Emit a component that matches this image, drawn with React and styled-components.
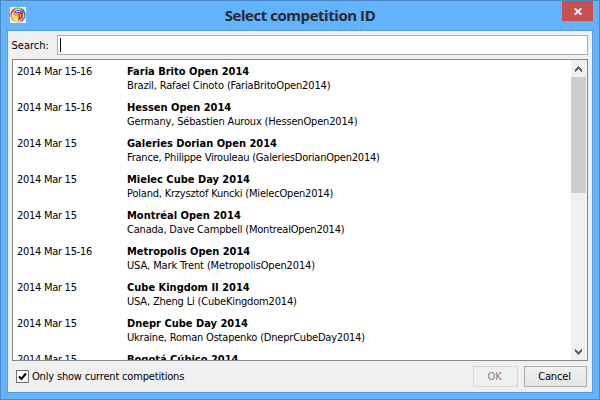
import React from "react";
import styled, { createGlobalStyle } from "styled-components";

const Global = createGlobalStyle`
  *, *::before, *::after { box-sizing: border-box; }
  body { margin: 0; overflow: hidden; }
`;

const Window = styled.main`
  width: 600px;
  height: 400px;
  display: flex;
  flex-direction: column;
  padding: 0 6px 6px;
  border: 1px solid #4b8ac6;
  background: #63b2fc;
  color: #000;
  font: 11px/14px "DejaVu Sans Condensed", "Noto Sans", sans-serif;
`;

const TitleBar = styled.header`
  display: grid;
  grid-template-columns: 31px 1fr 31px;
  height: 29px;
  flex: none;
`;

const AppIcon = styled.svg`
  width: 16px;
  height: 16px;
  margin: 6px 0 0 3px;
`;

const Title = styled.h1`
  margin: 0;
  text-align: center;
  font: 700 15px/29px "Open Sans", sans-serif;
  letter-spacing: ${(p) => p.$spacing}px;
  color: #26292d;
`;

const CloseButton = styled.button`
  display: flex;
  align-items: flex-start;
  width: 31px;
  height: 20px;
  padding: 7px 0 0 12px;
  border: 0;
  background: #c75050;
  svg { display: block; }
`;

const Content = styled.section`
  width: 586px;
  height: 363px;
  display: flex;
  flex-direction: column;
  padding: 4px 4px 0;
  border: 1px solid #559ade;
  background: #f0f0f0;
`;

const SearchRow = styled.div`
  display: flex;
  height: 20px;
  margin-bottom: 4px;
  line-height: 21px;
`;

const SearchLabel = styled.label`
  width: 45px;
  text-indent: -0.5px;
`;

const SearchField = styled.div`
  width: 531px;
  padding: 2px;
  border: 1px solid #abadb3;
  background: #fff;
`;

const Caret = styled.div`
  width: 1px;
  height: 14px;
  background: #000;
`;

const ListBox = styled.div`
  display: flex;
  width: 576px;
  height: 302px;
  border: 1px solid #828790;
  background: #fff;
`;

const List = styled.ul`
  width: 558px;
  height: 300px;
  margin: 0;
  padding: 5px 0 0 4px;
  overflow: hidden;
  list-style: none;
`;

const Row = styled.li`
  display: grid;
  grid-template-columns: 110px 1fr;
  height: 36px;
  white-space: nowrap;
`;

const Text = styled.span`
  display: block;
  letter-spacing: ${(p) => p.$spacing || 0}px;
`;

const Name = styled.strong`
  display: block;
  font-weight: 700;
`;

const ScrollBar = styled.div`
  width: 16px;
  height: 300px;
  display: flex;
  flex-direction: column;
  background: #f0f0f0;
`;

const ScrollButton = styled.div`
  height: 17px;
  padding: ${(p) => (p.$down ? "6px" : "6px")} 0 0 4px;
  svg { display: block; }
`;

const Thumb = styled.div`
  width: 15px;
  height: 116px;
  margin-bottom: auto;
  background: #cdcdcd;
`;

const Footer = styled.footer`
  display: flex;
  padding: 5px 1px 0 4px;
`;

const CheckBox = styled.span`
  width: 13px;
  height: 13px;
  margin: 4px 3px 0 0;
  border: 1px solid #707070;
  background: #fff;
  svg { display: block; }
`;

const CheckLabel = styled.span`
  flex: 1;
  line-height: 21px;
  letter-spacing: ${(p) => p.$spacing}px;
`;

const Button = styled.button`
  width: ${(p) => p.$width}px;
  height: 21px;
  margin-left: 6px;
  padding: 0 2px 0 0;
  border: 1px solid #acacac;
  background: linear-gradient(#f0f0f0, #e5e5e5);
  color: #000;
  font: inherit;
  line-height: 19px;
  letter-spacing: -0.15px;
  &:disabled { border-color: #d9d9d9; background: #efefef; color: #838383; }
`;

const competitions = [
  { date: "2014 Mar 15-16", name: "Faria Brito Open 2014", place: "Brazil, Rafael Cinoto (FariaBritoOpen2014)", spacing: -0.15 },
  { date: "2014 Mar 15-16", name: "Hessen Open 2014", place: "Germany, Sébastien Auroux (HessenOpen2014)", spacing: -0.17 },
  { date: "2014 Mar 15", name: "Galeries Dorian Open 2014", place: "France, Philippe Virouleau (GaleriesDorianOpen2014)", spacing: -0.22 },
  { date: "2014 Mar 15", name: "Mielec Cube Day 2014", place: "Poland, Krzysztof Kuncki (MielecOpen2014)", spacing: -0.2 },
  { date: "2014 Mar 15", name: "Montréal Open 2014", place: "Canada, Dave Campbell (MontrealOpen2014)", spacing: -0.2 },
  { date: "2014 Mar 15-16", name: "Metropolis Open 2014", place: "USA, Mark Trent (MetropolisOpen2014)", spacing: -0.13 },
  { date: "2014 Mar 15", name: "Cube Kingdom II 2014", place: "USA, Zheng Li (CubeKingdom2014)", spacing: -0.18 },
  { date: "2014 Mar 15", name: "Dnepr Cube Day 2014", place: "Ukraine, Roman Ostapenko (DneprCubeDay2014)", spacing: -0.2 },
  { date: "2014 Mar 15", name: "Bogotá Cúbico 2014" },
];

const Chevron = ({ down }) => (
  <svg width="7" height="6" viewBox="0 0 7 6" shapeRendering="crispEdges">
    <path
      d={
        down
          ? "M0 0H1V1H2V2H3V3H4V2H5V1H6V0H7V3H6V4H5V5H4V6H3V5H2V4H1V3H0Z"
          : "M0 6H1V5H2V4H3V3H4V4H5V5H6V6H7V3H6V2H5V1H4V0H3V1H2V2H1V3H0Z"
      }
      fill="#606060"
    />
  </svg>
);

const CubeIcon = () => (
  <AppIcon viewBox="0 0 16 16">
    <rect width="16" height="16" fill="#fff" />
    <g fill="none" strokeWidth="1.8">
      <path d="M1.2 8 A6.8 6.8 0 0 1 5.5 1.7" stroke="#e1473c" />
      <path d="M5.5 1.7 A6.8 6.8 0 0 1 11 1.9" stroke="#a9b45a" />
      <path d="M11 1.9 A6.8 6.8 0 0 1 14.8 8" stroke="#3e8f4c" />
      <path d="M14.8 8 A6.8 6.8 0 0 1 10 14.5" stroke="#6f83c0" />
      <path d="M10 14.5 A6.8 6.8 0 0 1 4 13.5" stroke="#f2d050" />
      <path d="M4 13.5 A6.8 6.8 0 0 1 1.2 8" stroke="#f18b3a" />
    </g>
    <path d="M2.8 5 L8 2.4 L13.4 4.2 L8.5 7 Z" fill="#4b63b3" />
    <path d="M2.8 5 L8.5 7 L8.3 13.8 L3.8 10.8 Z" fill="#f3a52f" />
    <path d="M4.4 8.6 L8.4 9.4 L8.3 13.8 L3.8 10.8 Z" fill="#f6dd3d" />
    <path d="M8.5 7 L13.4 4.2 L12.8 11 L8.3 13.8 Z" fill="#d8262e" />
    <path d="M6 4.5 L10 4.6 M10.7 7.2 V10.4" stroke="#e8e8f4" strokeWidth="0.9" />
  </AppIcon>
);

export default function App() {
  return (
    <>
      <Global />
      <Window>
        <TitleBar>
          <CubeIcon />
          <Title $spacing={-0.45}>Select competition ID</Title>
          <CloseButton aria-label="Close">
            <svg width="8" height="7" viewBox="0 0 8 7">
              <path d="M0.7 0.3 L7.3 6.7 M7.3 0.3 L0.7 6.7" stroke="#fff" strokeWidth="1.9" />
            </svg>
          </CloseButton>
        </TitleBar>
        <Content>
          <SearchRow>
            <SearchLabel>Search:</SearchLabel>
            <SearchField>
              <Caret />
            </SearchField>
          </SearchRow>
          <ListBox>
            <List>
              {competitions.map(({ date, name, place, spacing }) => (
                <Row key={name}>
                  <Text $spacing={-0.28}>{date}</Text>
                  <div>
                    <Name>{name}</Name>
                    {place && <Text $spacing={spacing}>{place}</Text>}
                  </div>
                </Row>
              ))}
            </List>
            <ScrollBar>
              <ScrollButton>
                <Chevron />
              </ScrollButton>
              <Thumb />
              <ScrollButton $down>
                <Chevron down />
              </ScrollButton>
            </ScrollBar>
          </ListBox>
          <Footer>
            <CheckBox>
              <svg width="11" height="11" viewBox="0 0 11 11">
                <path d="M2 5.3 L4.4 8 L9 2.5" fill="none" stroke="#000" strokeWidth="2" />
              </svg>
            </CheckBox>
            <CheckLabel $spacing={-0.18}>Only show current competitions</CheckLabel>
            <Button $width={45} disabled>OK</Button>
            <Button $width={63}>Cancel</Button>
          </Footer>
        </Content>
      </Window>
    </>
  );
}
